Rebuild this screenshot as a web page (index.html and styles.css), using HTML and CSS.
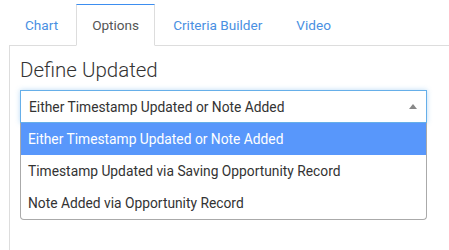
FILE: index.html
```html
<!DOCTYPE html>
<html>
<head>
<meta charset="utf-8">
<link rel="stylesheet" href="styles.css">
</head>
<body>
<div class="wrap">
  <ul class="tabs">
    <li class="tab">Chart</li>
    <li class="tab active">Options</li>
    <li class="tab">Criteria Builder</li>
    <li class="tab">Video</li>
  </ul>
  <div class="panel">
    <h3 class="title">Define Updated</h3>
    <div class="select">
      <div class="selection">
        <span class="value">Either Timestamp Updated or Note Added</span>
        <span class="arrow"></span>
      </div>
      <ul class="dropdown">
        <li class="option highlighted">Either Timestamp Updated or Note Added</li>
        <li class="option">Timestamp Updated via Saving Opportunity Record</li>
        <li class="option">Note Added via Opportunity Record</li>
      </ul>
    </div>
  </div>
</div>
</body>
</html>
```

FILE: styles.css
```css
html, body {
  margin: 0;
  padding: 0;
  background: #fff;
}
body {
  font-family: Roboto, "Liberation Sans", sans-serif;
  font-size: 13.8px;
  color: #333;
  overflow: hidden;
}
.wrap {
  padding: 4px 0 0 9px;
  height: 246px;
  display: flex;
  flex-direction: column;
}
.tabs {
  display: flex;
  list-style: none;
  margin: 0;
  padding: 0;
  border-bottom: 1px solid #ddd;
  font-size: 13.6px;
}
.tab {
  margin: 0 2px -1px 0;
  padding: 10px 15px;
  line-height: 20px;
  border: 1px solid transparent;
  color: #4a90e2;
}
.tab.active {
  border-color: #ddd;
  border-top-color: #3d8ef0;
  border-bottom-color: #fff;
  background: #fff;
  color: #555;
}
.panel {
  flex: 1;
  border-left: 1px solid #ddd;
  padding: 0 22px 0 10px;
}
.title {
  margin: 12px 0 8px 0;
  font-size: 20.5px;
  font-weight: 300;
  line-height: 24px;
  color: #333;
}
.select {
  width: 407px;
}
.selection {
  height: 33px;
  box-sizing: border-box;
  border: 1px solid #66afe9;
  box-shadow: 0 0 5px rgba(102, 175, 233, 0.45);
  display: flex;
  align-items: center;
  justify-content: space-between;
  padding: 0 8px;
}
.value {
  color: #333;
}
.arrow {
  width: 0;
  height: 0;
  border-style: solid;
  border-width: 0 4px 5px 4px;
  border-color: transparent transparent #888 transparent;
  margin-right: 1px;
}
.dropdown {
  list-style: none;
  margin: 0;
  padding: 0;
  border: 1px solid #aaa;
  border-top: none;
  border-radius: 0 0 4px 4px;
}
.option {
  height: 32px;
  line-height: 32px;
  padding: 0 7px;
  color: #333;
}
.option.highlighted {
  background: #5897fb;
  color: #fff;
}
```
